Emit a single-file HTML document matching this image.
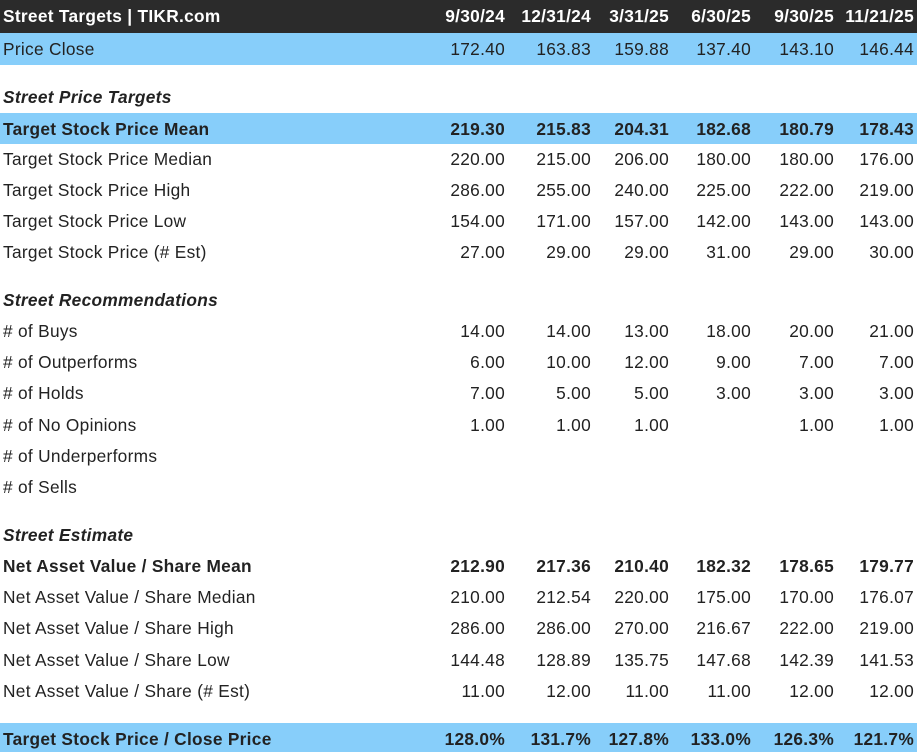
<!DOCTYPE html>
<html><head><meta charset="utf-8"><style>
body{margin:0;width:917px;height:752px;background:#fff;font-family:"Liberation Sans",sans-serif;font-size:17.3px;letter-spacing:0.3px;color:#222;position:relative;overflow:hidden}
.r{position:absolute;left:0;width:917px;height:31px;line-height:33px}
.r span{position:absolute;top:0;white-space:nowrap}
.l{left:3px}
.c1{right:412px}.c2{right:326px}.c3{right:248px}.c4{right:166px}.c5{right:83px}.c6{right:3px}
.hd{background:#2b2b2b;color:#fff;font-weight:bold;height:33px;line-height:33px}
.bl{background:#87cefa}
.b{font-weight:bold}
.s{font-weight:bold;font-style:italic}
</style></head><body>
<div class="r hd" style="top:0"><span class="l">Street Targets | TIKR.com</span><span class="c1">9/30/24</span><span class="c2">12/31/24</span><span class="c3">3/31/25</span><span class="c4">6/30/25</span><span class="c5">9/30/25</span><span class="c6">11/21/25</span></div>
<div class="r bl" style="top:33px;height:32px"><span class="l">Price Close</span><span class="c1">172.40</span><span class="c2">163.83</span><span class="c3">159.88</span><span class="c4">137.40</span><span class="c5">143.10</span><span class="c6">146.44</span></div>
<div class="r s" style="top:81px"><span class="l">Street Price Targets</span></div>
<div class="r bl b" style="top:113px"><span class="l">Target Stock Price Mean</span><span class="c1">219.30</span><span class="c2">215.83</span><span class="c3">204.31</span><span class="c4">182.68</span><span class="c5">180.79</span><span class="c6">178.43</span></div>
<div class="r" style="top:143px"><span class="l">Target Stock Price Median</span><span class="c1">220.00</span><span class="c2">215.00</span><span class="c3">206.00</span><span class="c4">180.00</span><span class="c5">180.00</span><span class="c6">176.00</span></div>
<div class="r" style="top:174px"><span class="l">Target Stock Price High</span><span class="c1">286.00</span><span class="c2">255.00</span><span class="c3">240.00</span><span class="c4">225.00</span><span class="c5">222.00</span><span class="c6">219.00</span></div>
<div class="r" style="top:205px"><span class="l">Target Stock Price Low</span><span class="c1">154.00</span><span class="c2">171.00</span><span class="c3">157.00</span><span class="c4">142.00</span><span class="c5">143.00</span><span class="c6">143.00</span></div>
<div class="r" style="top:236px"><span class="l">Target Stock Price (# Est)</span><span class="c1">27.00</span><span class="c2">29.00</span><span class="c3">29.00</span><span class="c4">31.00</span><span class="c5">29.00</span><span class="c6">30.00</span></div>
<div class="r s" style="top:284px"><span class="l">Street Recommendations</span></div>
<div class="r" style="top:315px"><span class="l"># of Buys</span><span class="c1">14.00</span><span class="c2">14.00</span><span class="c3">13.00</span><span class="c4">18.00</span><span class="c5">20.00</span><span class="c6">21.00</span></div>
<div class="r" style="top:346px"><span class="l"># of Outperforms</span><span class="c1">6.00</span><span class="c2">10.00</span><span class="c3">12.00</span><span class="c4">9.00</span><span class="c5">7.00</span><span class="c6">7.00</span></div>
<div class="r" style="top:377px"><span class="l"># of Holds</span><span class="c1">7.00</span><span class="c2">5.00</span><span class="c3">5.00</span><span class="c4">3.00</span><span class="c5">3.00</span><span class="c6">3.00</span></div>
<div class="r" style="top:409px"><span class="l"># of No Opinions</span><span class="c1">1.00</span><span class="c2">1.00</span><span class="c3">1.00</span><span class="c5">1.00</span><span class="c6">1.00</span></div>
<div class="r" style="top:440px"><span class="l"># of Underperforms</span></div>
<div class="r" style="top:471px"><span class="l"># of Sells</span></div>
<div class="r s" style="top:519px"><span class="l">Street Estimate</span></div>
<div class="r b" style="top:550px"><span class="l">Net Asset Value / Share Mean</span><span class="c1">212.90</span><span class="c2">217.36</span><span class="c3">210.40</span><span class="c4">182.32</span><span class="c5">178.65</span><span class="c6">179.77</span></div>
<div class="r" style="top:581px"><span class="l">Net Asset Value / Share Median</span><span class="c1">210.00</span><span class="c2">212.54</span><span class="c3">220.00</span><span class="c4">175.00</span><span class="c5">170.00</span><span class="c6">176.07</span></div>
<div class="r" style="top:612px"><span class="l">Net Asset Value / Share High</span><span class="c1">286.00</span><span class="c2">286.00</span><span class="c3">270.00</span><span class="c4">216.67</span><span class="c5">222.00</span><span class="c6">219.00</span></div>
<div class="r" style="top:644px"><span class="l">Net Asset Value / Share Low</span><span class="c1">144.48</span><span class="c2">128.89</span><span class="c3">135.75</span><span class="c4">147.68</span><span class="c5">142.39</span><span class="c6">141.53</span></div>
<div class="r" style="top:675px"><span class="l">Net Asset Value / Share (# Est)</span><span class="c1">11.00</span><span class="c2">12.00</span><span class="c3">11.00</span><span class="c4">11.00</span><span class="c5">12.00</span><span class="c6">12.00</span></div>
<div class="r bl b" style="top:723px;height:29px;line-height:32px"><span class="l">Target Stock Price / Close Price</span><span class="c1">128.0%</span><span class="c2">131.7%</span><span class="c3">127.8%</span><span class="c4">133.0%</span><span class="c5">126.3%</span><span class="c6">121.7%</span></div>
</body></html>
